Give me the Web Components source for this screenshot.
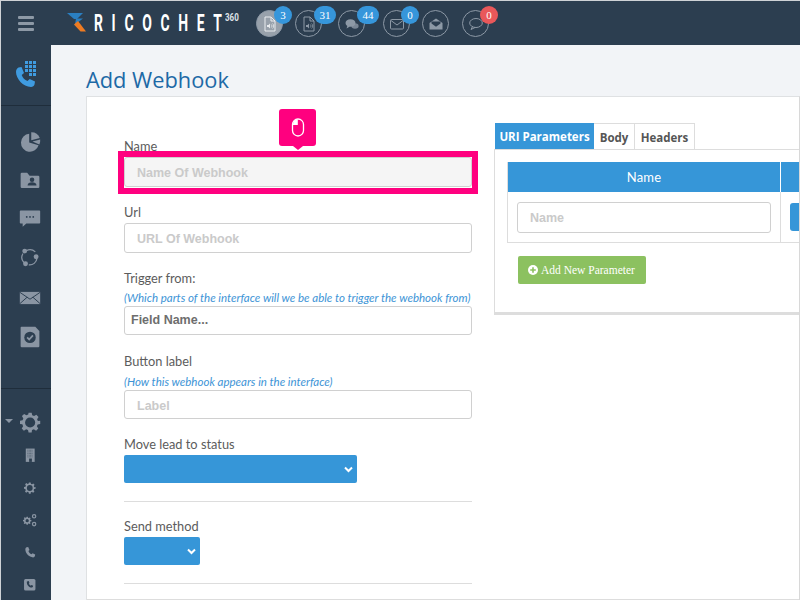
<!DOCTYPE html>
<html>
<head>
<meta charset="utf-8">
<title>Add Webhook</title>
<style>
  html, body { margin: 0; padding: 0; height: 600px; overflow: hidden; background: #cfd2d6; }
  body { font-family: "Lato", "Liberation Sans", sans-serif; }
</style>
</head>
<body>
<webhook-app></webhook-app>

<script>
const ICONS = {
  fileAudio: `<path d="M3 1h6l4 4v10H3z" fill="none" stroke="currentColor" stroke-width="1"/><path d="M9 1v4h4" fill="none" stroke="currentColor" stroke-width="1"/><path d="M5 9h1.500L8 7.500v5L6.500 11H5z" fill="currentColor"/><path d="M9.300 8.500a2 2 0 0 1 0 3M10.600 7.500a3.400 3.400 0 0 1 0 5" fill="none" stroke="currentColor" stroke-width=".8"/>`,
  chats: `<ellipse cx="6.500" cy="7" rx="5" ry="3.800" fill="currentColor"/><path d="M3.500 9.500 2.500 12.500 6 10.500z" fill="currentColor"/><ellipse cx="11" cy="10" rx="3.600" ry="2.800" fill="currentColor" opacity=".8"/>`,
  envelope: `<rect x="1.500" y="3.500" width="13" height="9.500" rx="1" fill="none" stroke="currentColor"/><path d="M2 4.500 8 9l6-4.500" fill="none" stroke="currentColor"/>`,
  envelopeOpen: `<path d="M1.500 7 8 2.500 14.500 7v6.500h-13z" fill="currentColor"/><path d="M3.500 7.500 8 10.800l4.500-3.300V5.500h-9z" fill="#2c3e50"/>`,
  bubble: `<ellipse cx="8" cy="7" rx="6.300" ry="4.500" fill="none" stroke="currentColor"/><path d="M4.500 10.500 3 13.500 7 11.500" fill="none" stroke="currentColor"/>`,
  pie: `<path d="M12.500 3.500A11 11 0 1 0 24 17.500L12.500 14z" fill="currentColor"/><path d="M15 1.500A11 11 0 0 1 25.500 8.500L15 11.500z" fill="currentColor"/><path d="M16.500 13 26 10.500A11 11 0 0 1 25 16.500z" fill="currentColor"/>`,
  folderUser: `<path d="M2 5a1.500 1.500 0 0 1 1.500-1.500H10L13 7h10.500A1.500 1.500 0 0 1 25 8.500v12a1.500 1.500 0 0 1-1.500 1.500h-20A1.500 1.500 0 0 1 2 20.500z" fill="currentColor"/><circle cx="16" cy="12" r="2.800" fill="#2c3e50"/><path d="M10.500 19c0-3 2.500-4 5.500-4s5.500 1 5.500 4z" fill="#2c3e50"/>`,
  message: `<path d="M2 3h23a1 1 0 0 1 1 1v14a1 1 0 0 1-1 1H9l-4.500 4v-4H2a1 1 0 0 1-1-1V4a1 1 0 0 1 1-1z" fill="currentColor"/><circle cx="9.500" cy="11" r="1.100" fill="#2c3e50"/><circle cx="13.500" cy="11" r="1.100" fill="#2c3e50"/><circle cx="17.500" cy="11" r="1.100" fill="#2c3e50"/>`,
  share: `<path d="M9 4.500A9.500 9.500 0 0 1 20 6M22 14a9 9 0 0 1-10 8M6 19a9 9 0 0 1-1-11" fill="none" stroke="currentColor" stroke-width="1.500"/><circle cx="7" cy="5" r="3" fill="currentColor"/><circle cx="21" cy="12" r="3" fill="currentColor"/><circle cx="8" cy="20.500" r="3" fill="currentColor"/>`,
  mail: `<rect x="1" y="6" width="25" height="15" fill="currentColor"/><path d="M1 6.500 13.500 15 26 6.500M1 20.500l9-8M26 20.500l-9-8" fill="none" stroke="#2c3e50" stroke-width="1.200"/>`,
  check: `<path d="M3 1h17l5 5v19a1 1 0 0 1-1 1H3a1 1 0 0 1-1-1V2a1 1 0 0 1 1-1z" fill="currentColor"/><circle cx="13.500" cy="14" r="7" fill="#2c3e50"/><path d="m10 14 2.500 2.600 4.600-5" fill="none" stroke="currentColor" stroke-width="2.200"/>`,
  building: `<path d="M5 1h16v24H5z" fill="currentColor"/><path d="M8 4h10M8 7h10M8 10h10M8 13h10M8 16h10" stroke="#2c3e50" stroke-width="1" stroke-dasharray="1.500 1"/><rect x="11" y="19" width="5" height="6" fill="#2c3e50"/>`,
  gear: `<path d="M11 1h4l.7 3.300 2.400 1 2.900-1.800 2.800 2.800-1.800 2.900 1 2.400L26 11.300v4l-3.300.7-1 2.400 1.800 2.900-2.800 2.800-2.900-1.800-2.400 1L15 26.500h-4l-.7-3.300-2.400-1-2.900 1.800-2.800-2.800 1.800-2.900-1-2.400L0 15.300v-4l3.300-.7 1-2.400L2.500 5.300l2.800-2.800 2.900 1.800 2.400-1z" fill="currentColor"/><circle cx="13" cy="13.500" r="6.500" fill="#2c3e50"/>`,
  gears: `<g transform="translate(0 6) scale(.58)"><path d="M11 1h4l.7 3.300 2.400 1 2.900-1.800 2.800 2.800-1.800 2.900 1 2.400L26 11.300v4l-3.300.7-1 2.400 1.800 2.900-2.800 2.800-2.900-1.800-2.400 1L15 26.500h-4l-.7-3.300-2.400-1-2.900 1.800-2.800-2.800 1.800-2.900-1-2.400L0 15.300v-4l3.300-.7 1-2.400L2.500 5.300l2.800-2.800 2.900 1.800 2.400-1z" fill="currentColor"/><circle cx="13" cy="13.500" r="5" fill="#2c3e50"/></g><circle cx="20" cy="6" r="3" fill="none" stroke="currentColor" stroke-width="2.200"/><circle cx="20" cy="20" r="3" fill="none" stroke="currentColor" stroke-width="2.200"/>`,
  phone: `<path d="M7 2.500 10 2l2.500 5.500-2 2c.8 2.800 3 5.300 6 6.500l2-2 5 2.500-.5 3c-.5 1.500-2 2.500-3.500 2.500C11.500 22 4.500 14.500 4.500 6.500 4.500 4.800 5.500 3 7 2.500z" fill="currentColor"/>`,
  phoneBox: `<rect x="2" y="2" width="22" height="22" rx="3" fill="currentColor"/><path d="M9 6.500 11 6l1.500 3.500-1.300 1.300c.6 1.800 2 3.200 3.800 4l1.300-1.300 3.200 1.500-.4 2c-.3 1-1.200 1.500-2.200 1.500-5 0-9.400-4.800-9.400-9.800C6.500 7.700 7.700 6.900 9 6.500z" fill="#2c3e50"/>`
};

class WebhookApp extends HTMLElement {
  constructor() {
    super();
    this.attachShadow({ mode: "open" });
  }

  connectedCallback() {
    this.shadowRoot.innerHTML = /*html*/ `
      <style>
        :host { display: flex; flex-direction: column; width: 799px; height: 599px; margin: 1px 0 0 1px; overflow: hidden; }
        .main { display: flex; flex: 1; min-height: 0; }
      </style>
      <top-bar></top-bar>
      <div class="main">
        <side-bar></side-bar>
        <webhook-page></webhook-page>
      </div>
    `;
  }
}

class TopBar extends HTMLElement {
  constructor() {
    super();
    this.attachShadow({ mode: "open" });
  }

  connectedCallback() {
    this.shadowRoot.innerHTML = /*html*/ `
      <style>
        :host { display: flex; align-items: center; height: 44px; background: #2c3e50; flex: none; }
        .burger { width: 16px; margin: 0 33px 0 17px; display: flex; flex-direction: column; gap: 3px; }
        .burger i { display: block; height: 3px; background: #8d99a6; border-radius: 1px; }
        .logo { display: flex; align-items: flex-start; width: 189px; height: 22px; flex: none; }
        .logo svg { flex: none; }
        .word { font: 700 24px/22px "Roboto", "Liberation Sans", sans-serif; color: #fff; letter-spacing: 15px; transform: scale(.58, 1); transform-origin: 0 0; margin-left: 8px; white-space: nowrap; width: 100px; }
        .word span { letter-spacing: 0; }
        .sup { font: 700 10px/10px "Roboto", "Liberation Sans", sans-serif; color: #dfe3e7; transform: scale(.8, 1); transform-origin: 0 0; position: relative; left: 31px; top: 1px; }
        .circles { display: flex; align-items: center; }
      </style>
      <div class="burger"><i></i><i></i><i></i></div>
      <div class="logo">
        <svg width="19" height="20" viewBox="0 0 19 20">
          <path d="M0 1h16l-6 6H7z" fill="#2a7fc1"/>
          <path d="M9 6.500h7L8 12.500z" fill="#2a7fc1"/>
          <path d="M7 12.500 11 9l8 10.500h-5.500z" fill="#ee7b22"/>
        </svg>
        <span class="word">RICOCHE<span>T</span></span>
        <span class="sup">360</span>
      </div>
      <div class="circles">
        <nav-circle icon="fileAudio" count="3" filled></nav-circle>
        <nav-circle icon="fileAudio" count="31" style="margin-left:12px"></nav-circle>
        <nav-circle icon="chats" count="44" style="margin-left:16px"></nav-circle>
        <nav-circle icon="envelope" count="0" style="margin-left:18px"></nav-circle>
        <nav-circle icon="envelopeOpen" style="margin-left:12px"></nav-circle>
        <nav-circle icon="bubble" count="0" red style="margin-left:13px"></nav-circle>
      </div>
    `;
  }
}

class NavCircle extends HTMLElement {
  constructor() {
    super();
    this.attachShadow({ mode: "open" });
  }

  connectedCallback() {
    const count = this.getAttribute("count");
    const wide = count && count.length > 1;
    const badge = count === null ? "" : `<span class="badge ${wide ? "wide" : ""}">${count}</span>`;
    this.shadowRoot.innerHTML = /*html*/ `
      <style>
        :host { display: block; position: relative; width: 27px; height: 27px; box-sizing: border-box; border: 1px solid #8d99a6; border-radius: 50%; color: #8d99a6; flex: none; }
        :host([filled]) { background: #98a1ab; color: #e9ecef; }
        svg { position: absolute; left: 5px; top: 5px; }
        .badge { position: absolute; top: -5px; right: -10px; width: 18px; height: 18px; border-radius: 9px; background: #3696db; color: #fff; font: 11px/18px "Liberation Serif", serif; text-align: center; }
        .badge.wide { width: 22px; right: -15px; }
        :host([red]) .badge { background: #e9585a; }
      </style>
      <svg width="16" height="16" viewBox="0 0 16 16">${ICONS[this.getAttribute("icon")]}</svg>
      ${badge}
    `;
  }
}

class SideBar extends HTMLElement {
  constructor() {
    super();
    this.attachShadow({ mode: "open" });
  }

  connectedCallback() {
    this.shadowRoot.innerHTML = /*html*/ `
      <style>
        :host { display: flex; flex-direction: column; width: 50px; background: #2c3e50; color: #8a95a3; flex: none; overflow: hidden; }
        .dial { height: 61px; flex: none; padding-bottom: 2px; display: flex; align-items: center; justify-content: center; border-bottom: 1px solid #1f2d3b; color: #3f9be0; box-sizing: border-box; }
        .group { display: flex; flex-direction: column; flex: none; }
        .top { padding-top: 17px; height: 283px; box-sizing: border-box; border-bottom: 1px solid #1f2d3b; }
        .caret { position: absolute; left: 4px; top: 30px; width: 0; height: 0; border: 4px solid transparent; border-top: 4px solid #8a95a3; border-bottom: 0; }
        .gear { position: relative; padding-top: 16px; }
      </style>
      <div class="dial">
        <svg width="24" height="28" viewBox="0 0 24 28">
          <path d="M4.500 7.500 7.500 7l2.500 6-2.300 2c1 2.800 3 5 5.800 6l2.200-2 5.300 2.500-.5 3c-.4 1.400-1.800 2.500-3.500 2.500C9 27 2 18.500 2 12c0-2 1-3.800 2.500-4.500z" fill="currentColor"/>
          <g fill="currentColor">
            <rect x="11" y="1" width="3" height="3"/><rect x="15" y="1" width="3" height="3"/><rect x="19" y="1" width="3" height="3"/>
            <rect x="11" y="5" width="3" height="3"/><rect x="15" y="5" width="3" height="3"/><rect x="19" y="5" width="3" height="3"/>
            <rect x="11" y="9" width="3" height="3"/><rect x="15" y="9" width="3" height="3"/><rect x="19" y="9" width="3" height="3"/>
            <rect x="15" y="13" width="3" height="3"/><rect x="19" y="13" width="3" height="3"/>
          </g>
        </svg>
      </div>
      <div class="group top">
        <side-icon icon="pie" size="22" slot-height="38"></side-icon>
        <side-icon icon="folderUser" size="22" slot-height="39"></side-icon>
        <side-icon icon="message" size="22" slot-height="38"></side-icon>
        <side-icon icon="share" size="22" slot-height="40"></side-icon>
        <side-icon icon="mail" size="22" slot-height="39"></side-icon>
        <side-icon icon="check" size="22" slot-height="40"></side-icon>
      </div>
      <div class="group">
        <div class="gear"><span class="caret"></span><side-icon icon="gear" size="21" slot-height="35"></side-icon></div>
        <side-icon icon="building" size="15" slot-height="31"></side-icon>
        <side-icon icon="gear" size="12" slot-height="33"></side-icon>
        <side-icon icon="gears" size="15" slot-height="33"></side-icon>
        <side-icon icon="phone" size="14" slot-height="31"></side-icon>
        <side-icon icon="phoneBox" size="14" slot-height="34"></side-icon>
      </div>
    `;
  }
}

class SideIcon extends HTMLElement {
  constructor() {
    super();
    this.attachShadow({ mode: "open" });
  }

  connectedCallback() {
    const size = this.getAttribute("size");
    const height = this.getAttribute("slot-height");
    this.shadowRoot.innerHTML = /*html*/ `
      <style>
        :host { display: flex; align-items: center; justify-content: center; height: ${height}px; flex: none; padding-left: 8px; }
        svg { display: block; }
      </style>
      <svg width="${size}" height="${size}" viewBox="0 0 27 27">${ICONS[this.getAttribute("icon")]}</svg>
    `;
  }
}

class WebhookPage extends HTMLElement {
  constructor() {
    super();
    this.attachShadow({ mode: "open" });
  }

  connectedCallback() {
    this.shadowRoot.innerHTML = /*html*/ `
      <style>
        :host { display: flex; flex-direction: column; flex: 1; min-width: 0; background: #f2f4f7; padding-left: 35px; box-sizing: border-box; }
        h1 { margin: 0; height: 51px; box-sizing: border-box; padding-top: 19px; font: 400 21.800px/32px "Open Sans", "Noto Sans", sans-serif; color: #1d69a6; }
        .card { flex: 1; min-height: 0; background: #fff; border: 1px solid #dfe1e3; border-right-color: #d8d8d8; border-bottom: 0; overflow: hidden; }
        .cols { display: flex; height: 503px; box-sizing: border-box; border-bottom: 1px solid #ddd; }
      </style>
      <h1>Add Webhook</h1>
      <div class="card">
        <div class="cols">
          <webhook-form></webhook-form>
          <params-panel></params-panel>
        </div>
      </div>
    `;
  }
}

class WebhookForm extends HTMLElement {
  constructor() {
    super();
    this.attachShadow({ mode: "open" });
  }

  connectedCallback() {
    this.shadowRoot.innerHTML = /*html*/ `
      <style>
        :host { display: flex; flex-direction: column; gap: 17px; width: 348px; margin-left: 37px; padding-top: 41px; flex: none; position: relative; }
        hr { border: 0; border-top: 1px solid #ddd; margin: 1px 0 0; height: 0; }
        .mark { position: absolute; left: -6px; top: 54px; width: 360px; height: 43px; box-sizing: border-box; border: 6px solid #ff007f; }
        .tip { position: absolute; left: 155px; top: 12px; width: 37px; height: 37px; background: #ff007f; border-radius: 3px; display: flex; align-items: center; justify-content: center; }
        .tip::after { content: ""; position: absolute; left: 14px; bottom: -4px; border: 5px solid transparent; border-top: 4px solid #ff007f; border-bottom: 0; }
      </style>
      <form-field label="Name"><text-field placeholder="Name Of Webhook" shaded></text-field></form-field>
      <form-field label="Url"><text-field placeholder="URL Of Webhook"></text-field></form-field>
      <form-field label="Trigger from:" hint="(Which parts of the interface will we be able to trigger the webhook from)"><text-field value="Field Name..." height="29"></text-field></form-field>
      <form-field style="margin-top:1px;--hint-gap:5px" label="Button label" hint="(How this webhook appears in the interface)"><text-field placeholder="Label" height="29" style="line-height:31px"></text-field></form-field>
      <form-field label="Move lead to status"><select-box width="233"></select-box></form-field>
      <hr>
      <form-field style="margin-top:-1px" label="Send method"><select-box width="76"></select-box></form-field>
      <hr>
      <div class="mark"></div>
      <div class="tip">
        <svg width="14" height="19" viewBox="0 0 14 19">
          <rect x="1.500" y="1" width="11" height="17" rx="5.500" fill="none" stroke="#fff" stroke-width="1.300"/>
          <path d="M2 7V6a4.800 4.800 0 0 1 4.800-4.500V7z" fill="#fff"/>
        </svg>
      </div>
    `;
  }
}

class FormField extends HTMLElement {
  constructor() {
    super();
    this.attachShadow({ mode: "open" });
  }

  connectedCallback() {
    const hint = this.getAttribute("hint");
    this.shadowRoot.innerHTML = /*html*/ `
      <style>
        :host { display: block; }
        .label { font: 400 12.800px/16px "Lato", sans-serif; color: #5c5c5c; margin-bottom: 3px; white-space: nowrap; }
        .hint { font: italic 400 11.500px/16px "Lato", sans-serif; color: #3d94d6; margin-top: var(--hint-gap, 4px); white-space: nowrap; }
        :host([hint]) .label { margin-bottom: 0; }
      </style>
      <div class="label">${this.getAttribute("label")}</div>
      ${hint ? `<div class="hint">${hint}</div>` : ""}
      <slot></slot>
    `;
  }
}

class TextField extends HTMLElement {
  constructor() {
    super();
    this.attachShadow({ mode: "open" });
  }

  connectedCallback() {
    const value = this.getAttribute("value");
    const height = Number(this.getAttribute("height") || 30);
    this.shadowRoot.innerHTML = /*html*/ `
      <style>
        :host { display: block; height: ${height}px; box-sizing: border-box; border: 1px solid #d0d0d0; border-radius: 3px; background: #fff; font: 700 12.500px/${height}px "Liberation Sans", sans-serif; color: #cacaca; padding-left: 12px; white-space: nowrap; overflow: hidden; }
        :host([shaded]) { background: #f5f5f5; }
        :host([value]) { color: #6e6e6e; padding-left: 6px; line-height: ${height - 2}px; }
      </style>
      ${value || this.getAttribute("placeholder")}
    `;
  }
}

class SelectBox extends HTMLElement {
  constructor() {
    super();
    this.attachShadow({ mode: "open" });
  }

  connectedCallback() {
    this.shadowRoot.innerHTML = /*html*/ `
      <style>
        :host { display: flex; align-items: center; justify-content: flex-end; width: ${this.getAttribute("width")}px; height: 28px; background: #3696d8; border-radius: 2px; padding-right: 4px; box-sizing: border-box; }
        svg { display: block; }
      </style>
      <svg width="9" height="7" viewBox="0 0 9 7"><path d="M1 1.500 4.500 5 8 1.500" fill="none" stroke="#fff" stroke-width="2"/></svg>
    `;
  }
}

class ParamsPanel extends HTMLElement {
  constructor() {
    super();
    this.attachShadow({ mode: "open" });
  }

  connectedCallback() {
    this.shadowRoot.innerHTML = /*html*/ `
      <style>
        :host { display: block; flex: 1; min-width: 0; margin-left: 22px; padding-top: 26px; }
        .tabs { display: flex; height: 26px; padding-left: 1px; }
        .tab { font: 700 11.500px/27px "Open Sans", sans-serif; color: #555; box-sizing: border-box; border: 1px solid #ddd; border-left: 0; border-bottom: 0; text-align: center; }
        .tab.on { background: #3696d8; color: #fff; border: 0; width: 99px; }
        .body { height: 166px; box-sizing: border-box; border: 1px solid #ddd; border-right: 0; border-bottom: 3px solid #ddd; padding: 12px 0 0 12px; overflow: hidden; }
        .table { width: 400px; border: 1px solid #ddd; border-top: 0; }
        .head { display: flex; height: 30px; background: #3696d8; color: #fff; font: 400 13px/30px "Lato", sans-serif; letter-spacing: .2px; text-align: center; }
        .head div:first-child { width: 272px; border-right: 1px solid #fff; }
        .row { display: flex; height: 50px; }
        .cell { width: 263px; padding: 10px 0 0 9px; border-right: 1px solid #ddd; flex: none; }
        .cell text-field { width: 254px; height: 31px; }
        .go { width: 40px; height: 28px; margin: 11px 0 0 9px; background: #3696d8; border-radius: 3px; }
        .add { display: inline-flex; align-items: center; gap: 3px; margin: 13px 0 0 11px; width: 128px; height: 28px; box-sizing: border-box; padding-left: 10px; background: #8cc160; border-radius: 2px; color: #fff; font: 400 11.500px/28px "Liberation Serif", serif; white-space: nowrap; }
      </style>
      <div class="tabs">
        <div class="tab on">URI Parameters</div>
        <div class="tab" style="width:41px">Body</div>
        <div class="tab" style="width:60px">Headers</div>
      </div>
      <div class="body">
        <div class="table">
          <div class="head"><div>Name</div><div></div></div>
          <div class="row">
            <div class="cell"><text-field placeholder="Name" height="31"></text-field></div>
            <div class="go"></div>
          </div>
        </div>
        <div class="add">
          <svg width="10" height="10" viewBox="0 0 10 10"><circle cx="5" cy="5" r="5" fill="#fff"/><path d="M5 2.200v5.600M2.200 5h5.600" stroke="#8cc160" stroke-width="1.600"/></svg>
          Add New Parameter
        </div>
      </div>
    `;
  }
}

customElements.define("webhook-app", WebhookApp);
customElements.define("top-bar", TopBar);
customElements.define("nav-circle", NavCircle);
customElements.define("side-bar", SideBar);
customElements.define("side-icon", SideIcon);
customElements.define("webhook-page", WebhookPage);
customElements.define("webhook-form", WebhookForm);
customElements.define("form-field", FormField);
customElements.define("text-field", TextField);
customElements.define("select-box", SelectBox);
customElements.define("params-panel", ParamsPanel);
</script>
</body>
</html>
